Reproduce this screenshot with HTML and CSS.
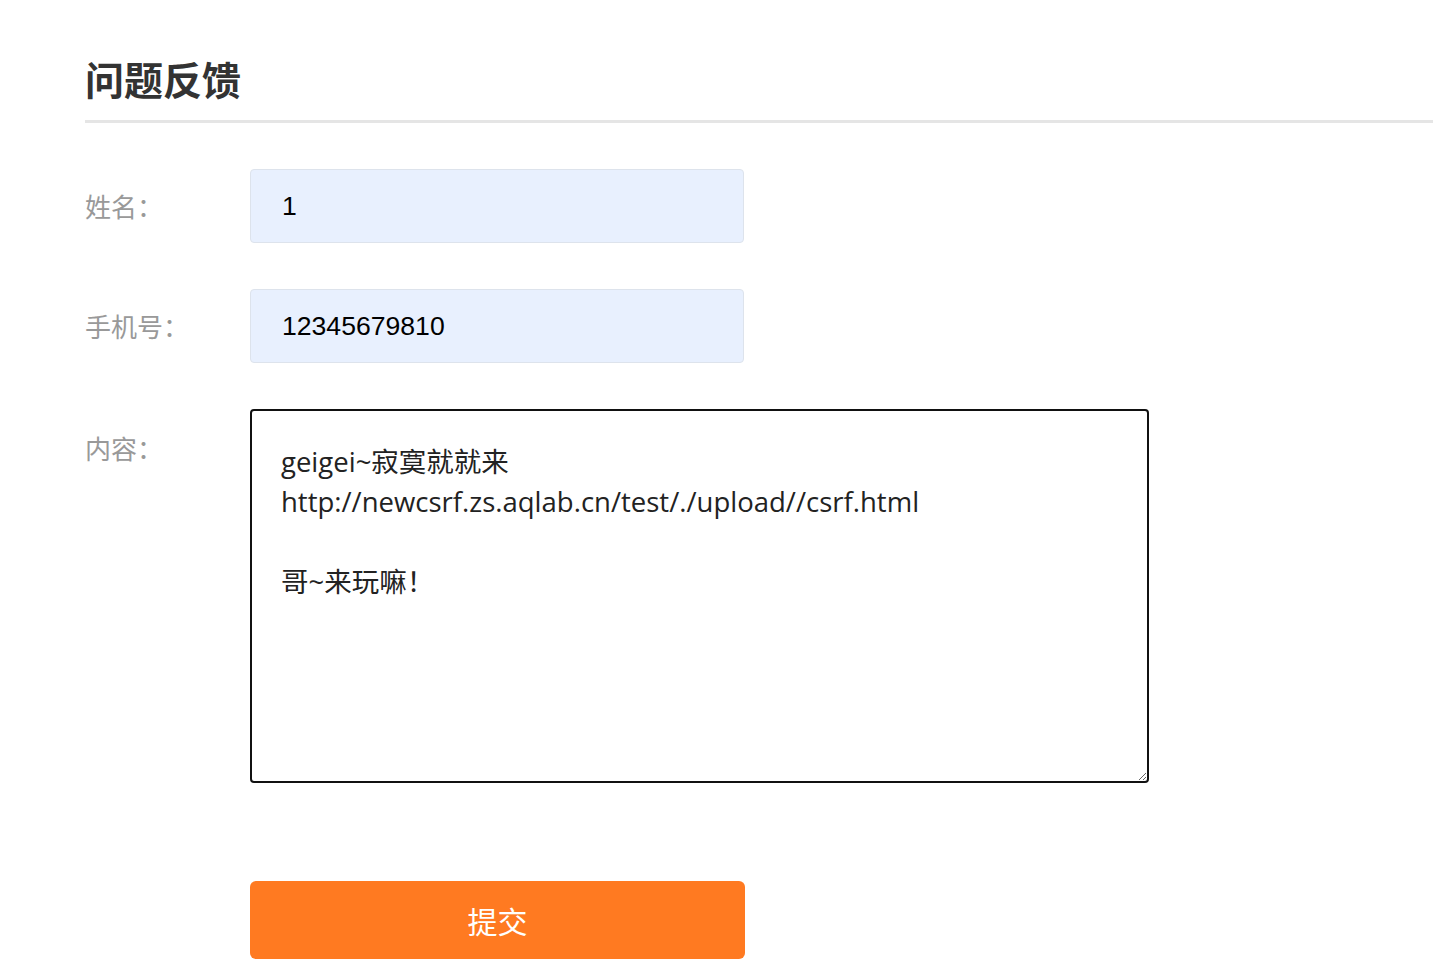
FILE: index.html
```html
<!DOCTYPE html>
<html lang="zh-CN">
<head>
<meta charset="utf-8">
<title>问题反馈</title>
<link rel="stylesheet" href="styles.css">
</head>
<body>
<div class="page">
  <h1 class="title">问题反馈</h1>
  <form class="form">
    <div class="row">
      <label class="label">姓名：</label>
      <input class="input" type="text" value="1">
    </div>
    <div class="row">
      <label class="label">手机号：</label>
      <input class="input" type="text" value="12345679810">
    </div>
    <div class="row row-top">
      <label class="label label-top">内容：</label>
      <textarea class="textarea">geigei~寂寞就就来
http://newcsrf.zs.aqlab.cn/test/./upload//csrf.html

哥~来玩嘛！</textarea>
    </div>
    <div class="row row-btn">
      <span class="label"></span>
      <button class="btn" type="button">提交</button>
    </div>
  </form>
</div>
</body>
</html>
```

FILE: styles.css
```css
html, body {
  margin: 0;
  padding: 0;
  background: #fff;
}
body {
  font-family: "Noto Sans CJK SC", "Noto Sans", sans-serif;
  overflow: hidden;
}
.page {
  padding: 54px 0 0 85px;
}
.title {
  margin: 0;
  font-size: 39px;
  line-height: 48px;
  font-weight: 700;
  color: #333;
  padding-bottom: 18px;
  border-bottom: 3px solid #e5e5e5;
}
.form {
  display: flex;
  flex-direction: column;
  gap: 46px;
  padding-top: 46px;
}
.row {
  display: flex;
  align-items: center;
}
.row-top {
  align-items: flex-start;
}
.label {
  width: 165px;
  flex: none;
  font-size: 26px;
  color: #999;
  line-height: 40px;
}
.label-top {
  padding-top: 19px;
}
.input {
  box-sizing: border-box;
  width: 494px;
  height: 74px;
  border: 1px solid #dde3ec;
  border-radius: 4px;
  background: #e8f0fe;
  padding: 0 31px;
  font-family: "Liberation Sans", Arial, sans-serif;
  font-size: 26.6px;
  color: #000;
  outline: none;
}
.textarea {
  box-sizing: border-box;
  width: 899px;
  height: 374px;
  border: 2px solid #111;
  border-radius: 4px;
  padding: 31px 29px;
  font-family: "Open Sans", "Noto Sans CJK SC", sans-serif;
  font-size: 27.5px;
  line-height: 40px;
  color: #222;
  resize: vertical;
  outline: none;
  background: #fff;
}
.row-btn {
  margin-top: 52px;
}
.btn {
  width: 495px;
  height: 78px;
  border: none;
  border-radius: 6px;
  background: #ff7a21;
  color: #fff;
  font-family: "Noto Sans CJK SC", sans-serif;
  font-size: 30px;
  cursor: pointer;
}
```
